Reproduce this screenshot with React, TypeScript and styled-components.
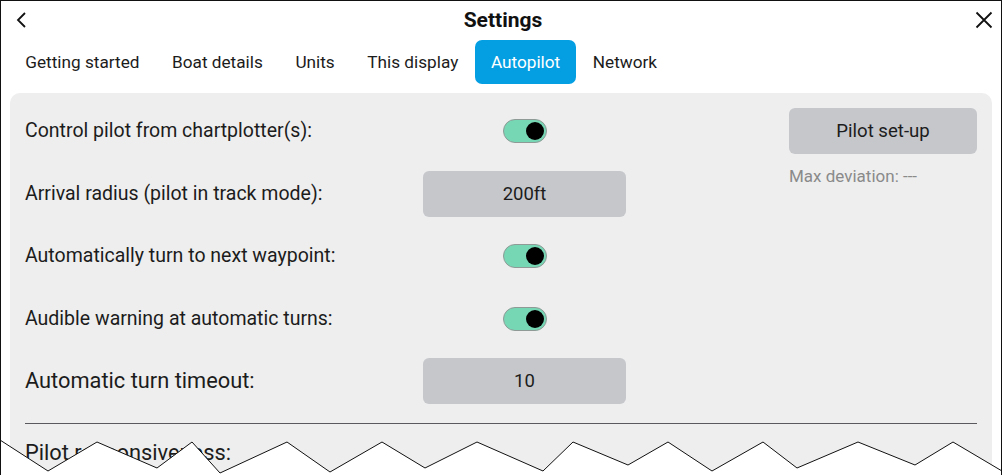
import React from 'react';
import styled, {createGlobalStyle} from 'styled-components';

const GlobalStyle = createGlobalStyle`
  html, body {
    margin: 0;
    padding: 0;
    background: #fff;
  }
  body {
    font-family: Roboto, "Liberation Sans", sans-serif;
    color: #1c1c1c;
  }
`

const tabs = ['Getting started', 'Boat details', 'Units', 'This display', 'Autopilot', 'Network']

// the torn bottom edge of the screenshot
const tear = [
    [0, 440], [48, 471], [97, 442], [157, 468], [192, 442], [220, 473], [287, 442], [330, 472],
    [382, 442], [425, 468], [477, 442], [543, 471], [573, 442], [628, 465], [668, 442], [712, 471],
    [763, 442], [797, 468], [858, 442], [915, 465], [953, 442], [1002, 471],
]

type RowType = {
    label: string
    kind: 'toggle' | 'value'
    value?: string
    large?: boolean
}

const rows: RowType[] = [
    {label: 'Control pilot from chartplotter(s):', kind: 'toggle'},
    {label: 'Arrival radius (pilot in track mode):', kind: 'value', value: '200ft'},
    {label: 'Automatically turn to next waypoint:', kind: 'toggle'},
    {label: 'Audible warning at automatic turns:', kind: 'toggle'},
    {label: 'Automatic turn timeout:', kind: 'value', value: '10', large: true},
]

export default function App() {
    const line = tear.map(p => p.join(',')).join(' ')
    return (
        <>
            <GlobalStyle/>
            <Screen>
                <Header>
                    <IconButton aria-label="back">
                        <svg width="12" height="18" viewBox="0 0 12 18">
                            <path d="M9 2 L2 9 L9 16" fill="none" stroke="#111" strokeWidth="1.8"/>
                        </svg>
                    </IconButton>
                    <Title>Settings</Title>
                    <IconButton aria-label="close">
                        <svg width="18" height="18" viewBox="0 0 18 18">
                            <path d="M1.5 1.5 L16.5 16.5 M16.5 1.5 L1.5 16.5" fill="none" stroke="#111" strokeWidth="1.8"/>
                        </svg>
                    </IconButton>
                </Header>
                <Tabs>
                    {tabs.map(t => <Tab key={t} $active={t === 'Autopilot'}>{t}</Tab>)}
                </Tabs>
                <Panel>
                    <Settings>
                        {rows.map(r => (
                            <Row key={r.label}>
                                <Label $large={r.large}>{r.label}</Label>
                                <Control>
                                    {r.kind === 'toggle'
                                        ? <Toggle><Knob/></Toggle>
                                        : <ValueButton>{r.value}</ValueButton>}
                                </Control>
                            </Row>
                        ))}
                        <Divider/>
                        <Label $large>Pilot responsiveness:</Label>
                    </Settings>
                    <Side>
                        <SetupButton>Pilot set-up</SetupButton>
                        <Hint>Max deviation: ---</Hint>
                    </Side>
                </Panel>
                <Tear viewBox="0 0 1002 475" preserveAspectRatio="none">
                    <polygon points={`${line} 1002,475 0,475`} fill="#fff"/>
                    <polyline points={line} fill="none" stroke="#111" strokeWidth="1"/>
                </Tear>
            </Screen>
        </>
    );
}

const Screen = styled.div`
  position: relative;
  box-sizing: border-box;
  width: 1002px;
  height: 475px;
  border: 1px solid #111;
  border-bottom: none;
  overflow: hidden;
  background: #fff;
`
const Header = styled.div`
  display: flex;
  align-items: center;
  justify-content: space-between;
  height: 38px;
  padding: 0 5px 0 9px;
`
const IconButton = styled.button`
  display: flex;
  align-items: center;
  justify-content: center;
  width: 24px;
  height: 24px;
  padding: 0;
  border: none;
  background: none;
`
const Title = styled.h1`
  margin: 0;
  font-size: 21px;
  font-weight: 700;
  color: #111;
`
const Tabs = styled.div`
  display: flex;
  align-items: center;
  height: 44px;
  margin-top: 1px;
  padding-left: 8px;
`
const Tab = styled.div<{ $active?: boolean }>`
  display: flex;
  align-items: center;
  height: 44px;
  padding: 0 16.3px;
  border-radius: 7px;
  font-size: 17.2px;
  color: ${p => p.$active ? '#fff' : '#1c1c1c'};
  background: ${p => p.$active ? '#049fe3' : 'transparent'};
`
const Panel = styled.div`
  display: flex;
  justify-content: space-between;
  margin: 9px 9px 0 9px;
  padding: 7px 15px 0 15px;
  height: 400px;
  background: #eeeeee;
  border-radius: 10px;
`
const Settings = styled.div`
  display: flex;
  flex-direction: column;
  width: 952px;
  margin-right: -952px;
`
const Row = styled.div`
  display: flex;
  align-items: center;
  height: 62.5px;
`
const Label = styled.div<{ $large?: boolean }>`
  width: 398px;
  font-size: ${p => p.$large ? '21.8px' : '19.5px'};
  color: #1c1c1c;
  line-height: 24px;
`
const Control = styled.div`
  display: flex;
  justify-content: center;
  width: 203px;
`
const Toggle = styled.div`
  box-sizing: border-box;
  display: flex;
  align-items: center;
  justify-content: flex-end;
  width: 44px;
  height: 24px;
  padding: 0 2px;
  border: 1px solid #8f9a96;
  border-radius: 12px;
  background: #76d7b5;
`
const Knob = styled.div`
  width: 18px;
  height: 18px;
  border-radius: 50%;
  background: #000;
`
const ValueButton = styled.div`
  display: flex;
  align-items: center;
  justify-content: center;
  width: 203px;
  height: 46px;
  border-radius: 6px;
  background: #c5c7cb;
  font-size: 18.5px;
  color: #1c1c1c;
`
const Divider = styled.div`
  height: 1px;
  margin: 10px 0 17px;
  background: #5a5a5e;
`
const Side = styled.div`
  display: flex;
  flex-direction: column;
  width: 188px;
  margin-left: auto;
  padding-top: 8px;
`
const SetupButton = styled.div`
  display: flex;
  align-items: center;
  justify-content: center;
  height: 46px;
  border-radius: 6px;
  background: #c5c7cb;
  font-size: 18.6px;
  color: #1c1c1c;
`
const Hint = styled.div`
  margin-top: 12px;
  font-size: 17px;
  color: #8a8a8a;
`
const Tear = styled.svg`
  position: absolute;
  left: -1px;
  top: -1px;
  width: 1002px;
  height: 475px;
  pointer-events: none;
`
